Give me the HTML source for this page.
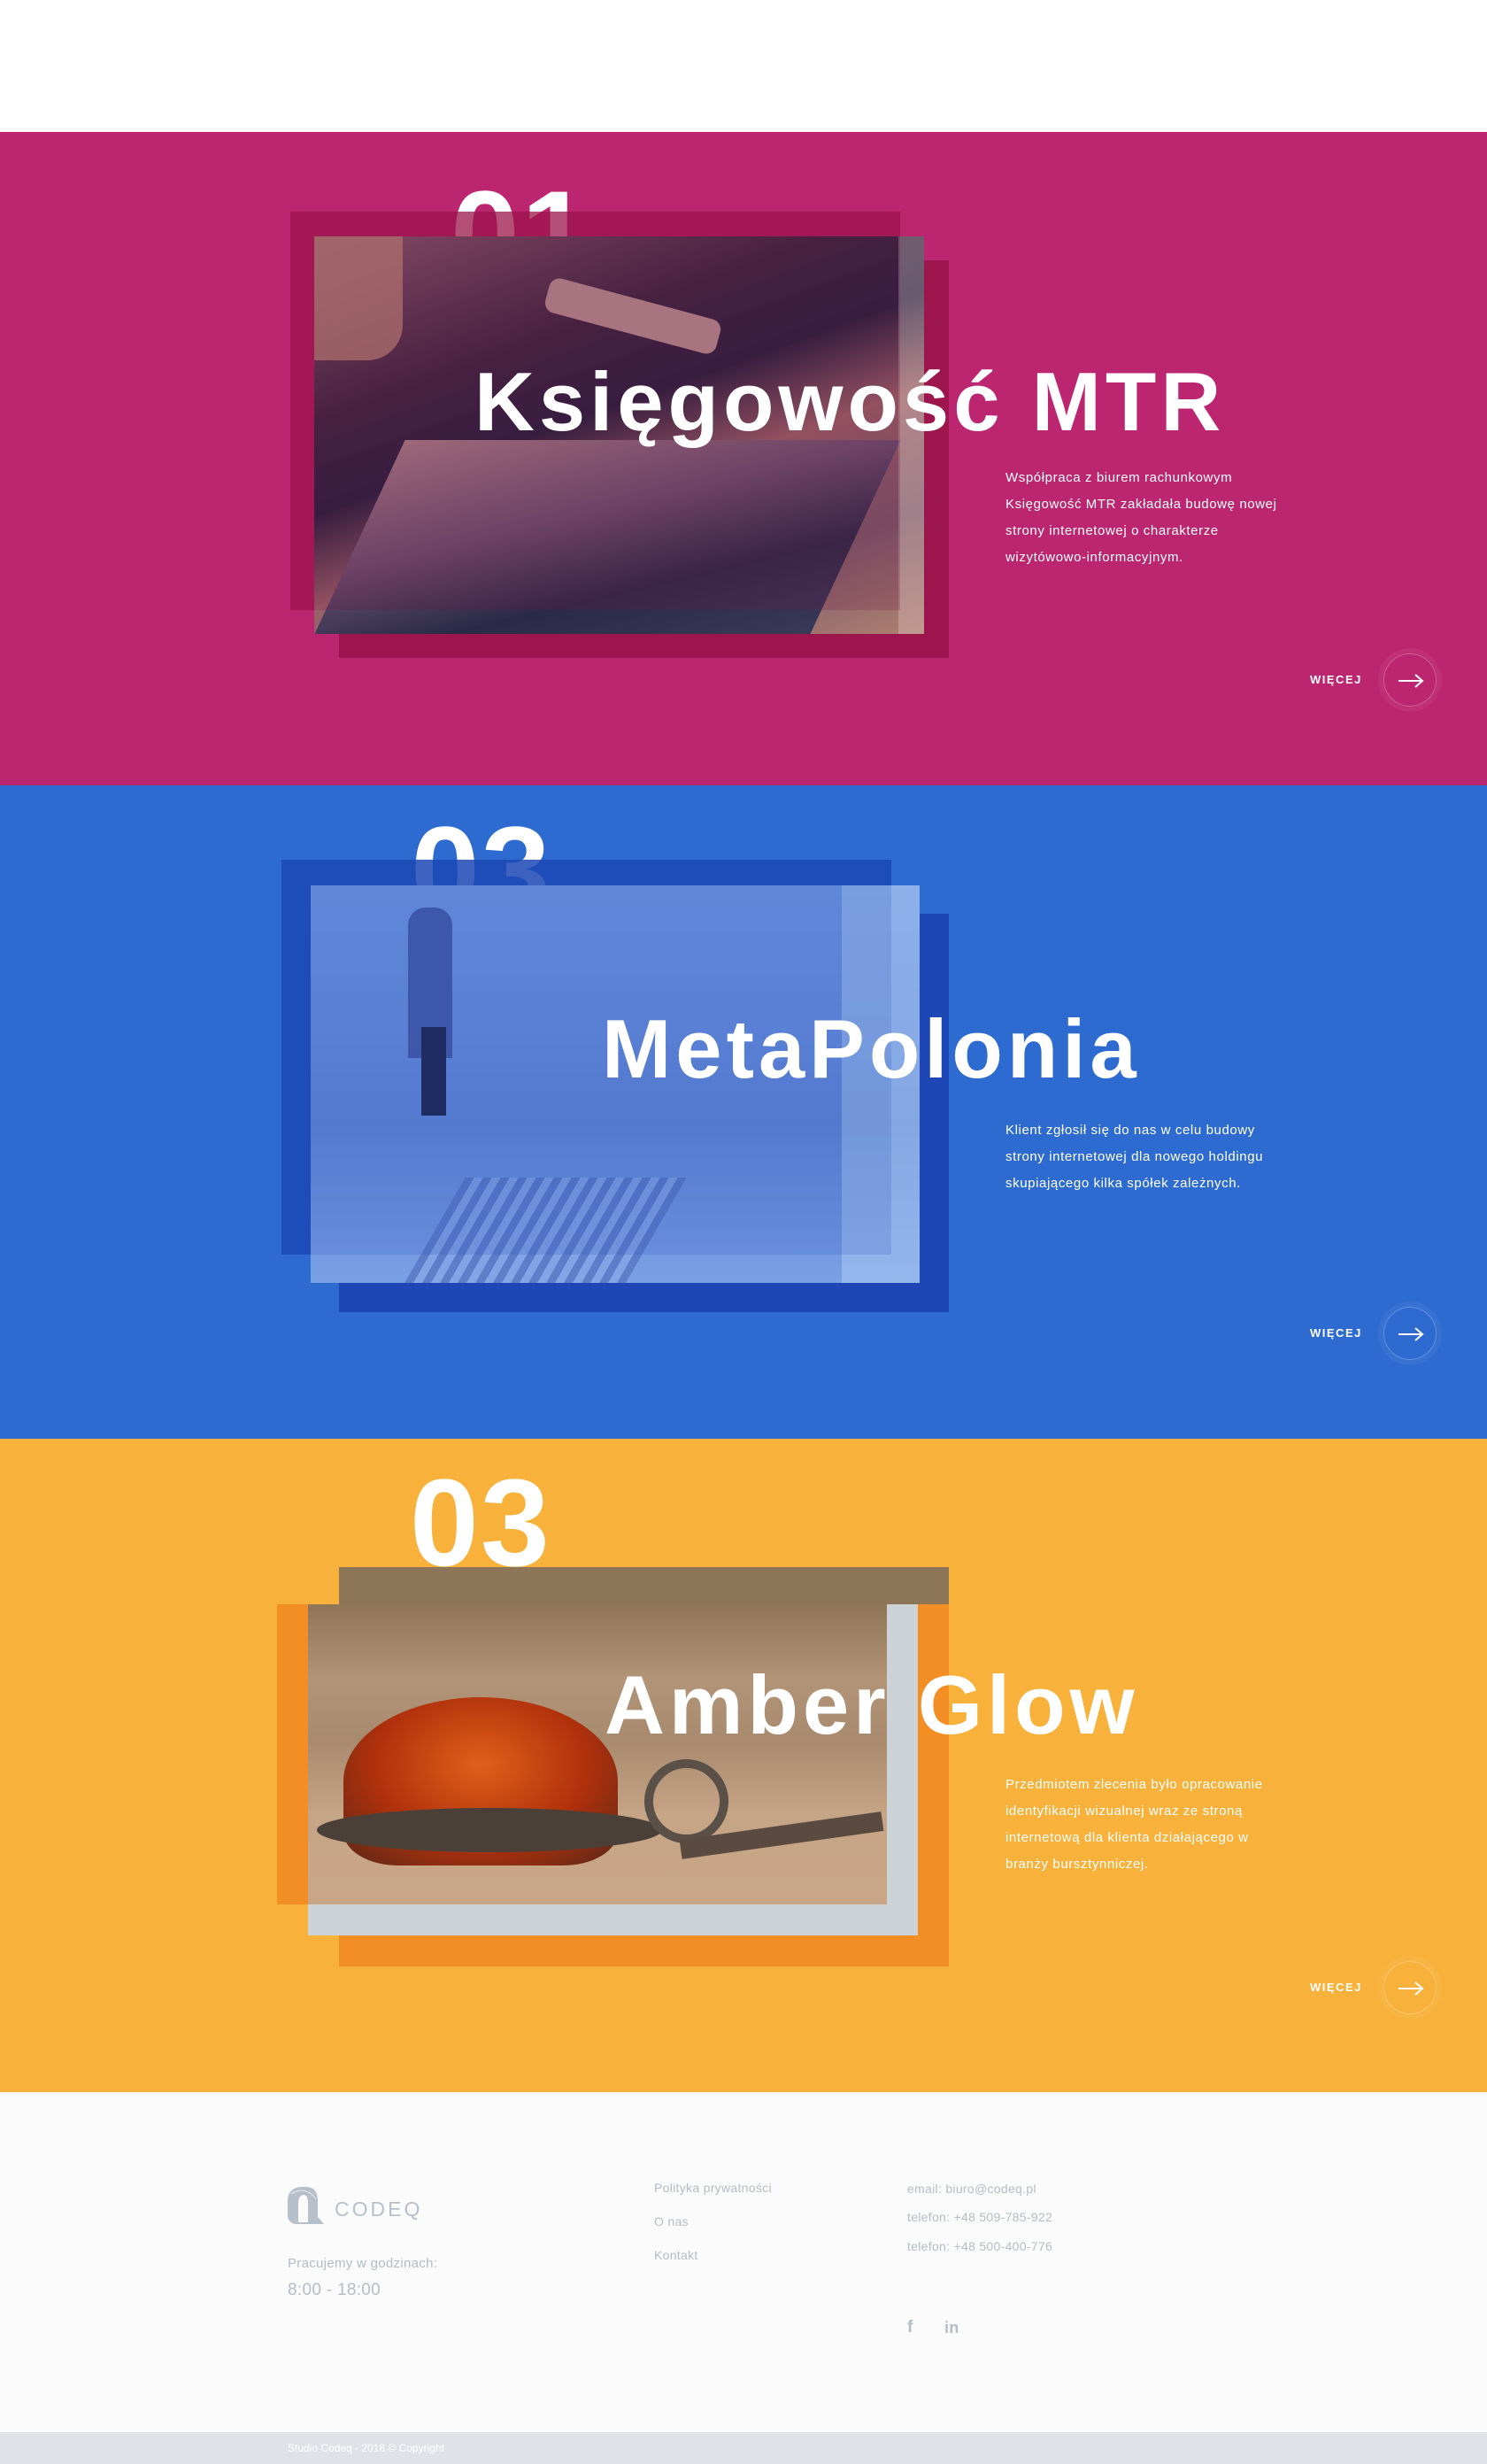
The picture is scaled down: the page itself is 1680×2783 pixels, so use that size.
<!DOCTYPE html>
<html><head><meta charset="utf-8"><style>
*{margin:0;padding:0;box-sizing:border-box}
body{width:1680px;height:2783px;position:relative;overflow:hidden;background:#fff;font-family:"Liberation Sans",sans-serif}
.a{position:absolute}
.num{position:absolute;font-weight:bold;font-size:140px;line-height:140px;color:#fff;letter-spacing:2px}
.title{position:absolute;font-weight:bold;font-size:94px;line-height:94px;color:#fff;white-space:nowrap;letter-spacing:5px}
.desc{position:absolute;left:1136px;font-size:15px;line-height:30px;color:#fff;letter-spacing:.6px;white-space:nowrap}
.more{position:absolute;left:1480px;font-size:13px;font-weight:bold;color:#fff;letter-spacing:1.5px;line-height:16px}
.circ{position:absolute;width:60px;height:60px;border-radius:50%;border:1px solid rgba(255,255,255,.25);box-shadow:0 0 0 6px rgba(255,255,255,.05)}
.circ svg{position:absolute;left:15px;top:20px}
.f{position:absolute;font-size:14px;color:#b4bcc6;white-space:nowrap;letter-spacing:.3px}
</style></head><body>

<!-- PINK -->
<div class="a" style="left:0;top:149px;width:1680px;height:738px;background:#bc2570"></div>
<div class="a" style="left:383px;top:294px;width:689px;height:449px;background:#9c154d"></div>
<div class="num" style="left:509px;top:195px">01</div>
<div class="a" style="left:328px;top:239px;width:689px;height:450px;background:rgba(155,20,75,.75)"></div>
<div class="a" style="left:355px;top:267px;width:689px;height:449px;background:linear-gradient(160deg,#8a5a6e 0%,#3a2540 30%,#26203f 45%,#9a6268 60%,#7a5a6a 80%,#b08070 100%);overflow:hidden">
  <div class="a" style="left:0;top:230px;width:560px;height:220px;background:linear-gradient(165deg,#a88088 0%,#6a5070 40%,#2a2a48 70%,#3a3a58 100%);transform:skewX(-25deg);transform-origin:bottom left"></div>
  <div class="a" style="left:260px;top:70px;width:200px;height:40px;border-radius:12px;background:#b59090;transform:rotate(15deg)"></div>
  <div class="a" style="left:0;top:0;width:100px;height:140px;background:#b88575;border-radius:0 0 40px 0;opacity:.8"></div>
  <div class="a" style="left:660px;top:0;width:29px;height:449px;background:rgba(230,200,200,.35)"></div>
</div>
<div class="a" style="left:355px;top:267px;width:662px;height:422px;background:rgba(120,20,70,.22)"></div>
<div class="title" style="left:536px;top:407px">Księgowość MTR</div>
<div class="desc" style="top:525px">Współpraca z biurem rachunkowym<br>Księgowość MTR zakładała budowę nowej<br>strony internetowej o charakterze<br>wizytówowo-informacyjnym.</div>
<div class="more" style="top:760px">WIĘCEJ</div>
<div class="circ" style="left:1563px;top:738px"><svg width="30" height="20" viewBox="0 0 30 20"><path d="M1 10H28M20 3L28 10L20 17" stroke="#fff" stroke-width="2" fill="none"/></svg></div>

<!-- BLUE -->
<div class="a" style="left:0;top:887px;width:1680px;height:738px;background:#2d6bd1"></div>
<div class="a" style="left:383px;top:1032px;width:689px;height:450px;background:#1d47b5"></div>
<div class="num" style="left:464px;top:913px">03</div>
<div class="a" style="left:318px;top:971px;width:689px;height:446px;background:rgba(28,70,180,.85)"></div>
<div class="a" style="left:351px;top:1000px;width:688px;height:449px;background:linear-gradient(180deg,#6d95e0 0%,#5e84d4 60%,#7aa0e6 100%);overflow:hidden">
  <div class="a" style="left:110px;top:25px;width:50px;height:170px;background:#3a4e98;border-radius:20px 20px 0 0;opacity:.8"></div>
  <div class="a" style="left:125px;top:160px;width:28px;height:100px;background:#1e2550"></div>
  <div class="a" style="left:600px;top:0;width:88px;height:449px;background:rgba(180,210,245,.45)"></div>
  <div class="a" style="left:140px;top:330px;width:250px;height:120px;background:repeating-linear-gradient(90deg,#4c68b8 0 10px,#8aa8e6 10px 20px);opacity:.6;transform:skewX(-30deg)"></div>
</div>
<div class="a" style="left:351px;top:1000px;width:656px;height:417px;background:rgba(40,80,190,.18)"></div>
<div class="title" style="left:680px;top:1138px">MetaPolonia</div>
<div class="desc" style="top:1262px">Klient zgłosił się do nas w celu budowy<br>strony internetowej dla nowego holdingu<br>skupiającego kilka spółek zależnych.</div>
<div class="more" style="top:1498px">WIĘCEJ</div>
<div class="circ" style="left:1563px;top:1476px"><svg width="30" height="20" viewBox="0 0 30 20"><path d="M1 10H28M20 3L28 10L20 17" stroke="#fff" stroke-width="2" fill="none"/></svg></div>

<!-- ORANGE -->
<div class="a" style="left:0;top:1625px;width:1680px;height:738px;background:#f8b13a"></div>
<div class="num" style="left:463px;top:1650px">03</div>
<div class="a" style="left:383px;top:1770px;width:689px;height:451px;background:#f28e24"></div>
<div class="a" style="left:383px;top:1770px;width:689px;height:42px;background:#8d7657"></div>
<div class="a" style="left:313px;top:1812px;width:689px;height:339px;background:#f28e24"></div>
<div class="a" style="left:348px;top:1812px;width:689px;height:374px;background:#cdd2d6"></div>
<div class="a" style="left:348px;top:1812px;width:654px;height:339px;background:linear-gradient(180deg,#8f7558 0%,#b29478 25%,#a88a6e 45%,#c6a486 70%,#c9a688 100%);overflow:hidden">
  <div class="a" style="left:40px;top:105px;width:310px;height:190px;border-radius:50% 50% 20% 20%;background:radial-gradient(ellipse at 50% 40%,#e0601a 0%,#b0300c 55%,#5a2818 100%)"></div>
  <div class="a" style="left:10px;top:230px;width:390px;height:50px;border-radius:50%;background:#4a4038"></div>
  <div class="a" style="left:380px;top:175px;width:95px;height:95px;border-radius:50%;border:10px solid #5a5048"></div>
  <div class="a" style="left:420px;top:250px;width:230px;height:22px;background:#5a4a40;transform:rotate(-8deg)"></div>
</div>
<div class="title" style="left:683px;top:1879px">Amber Glow</div>
<div class="desc" style="top:2001px">Przedmiotem zlecenia było opracowanie<br>identyfikacji wizualnej wraz ze stroną<br>internetową dla klienta działającego w<br>branży bursztynniczej.</div>
<div class="more" style="top:2237px">WIĘCEJ</div>
<div class="circ" style="left:1563px;top:2215px"><svg width="30" height="20" viewBox="0 0 30 20"><path d="M1 10H28M20 3L28 10L20 17" stroke="#fff" stroke-width="2" fill="none"/></svg></div>

<!-- FOOTER -->
<div class="a" style="left:0;top:2363px;width:1680px;height:384px;background:#fbfbfb"></div>
<svg class="a" style="left:325px;top:2470px" width="42" height="42" viewBox="0 0 42 42">
<path d="M0 16C0 6 6 0 16 0H20C30 0 34 6 34 16V34L41 42H10C4 42 0 38 0 32Z" fill="#b7c0c9"/>
<path d="M12 40V18C12 12 15 9 18 9C21 9 23 12 23 18V40" fill="#fbfbfb"/>
<path d="M4 8C12 2 24 2 32 14" stroke="#e6eaee" stroke-width="1" fill="none"/>
</svg>
<div class="a" style="left:378px;top:2482px;font-size:23px;line-height:26px;color:#b7c0c9;letter-spacing:3px">CODEQ</div>
<div class="f" style="left:325px;top:2548px;font-size:15px">Pracujemy w godzinach:</div>
<div class="f" style="left:325px;top:2576px;font-size:19px">8:00 - 18:00</div>
<div class="f" style="left:739px;top:2463px">Polityka prywatności</div>
<div class="f" style="left:739px;top:2501px">O nas</div>
<div class="f" style="left:739px;top:2539px">Kontakt</div>
<div class="f" style="left:1025px;top:2464px">email: biuro@codeq.pl</div>
<div class="f" style="left:1025px;top:2496px">telefon: +48 509-785-922</div>
<div class="f" style="left:1025px;top:2529px">telefon: +48 500-400-776</div>
<div class="f" style="left:1025px;top:2618px;font-size:19px;font-weight:bold">f</div>
<div class="f" style="left:1067px;top:2619px;font-size:18px;font-weight:bold">in</div>
<div class="a" style="left:0;top:2747px;width:1680px;height:36px;background:#dfe2e6"></div>
<div class="a" style="left:325px;top:2758px;font-size:12px;color:#fff">Studio Codeq - 2018 © Copyright</div>
</body></html>
